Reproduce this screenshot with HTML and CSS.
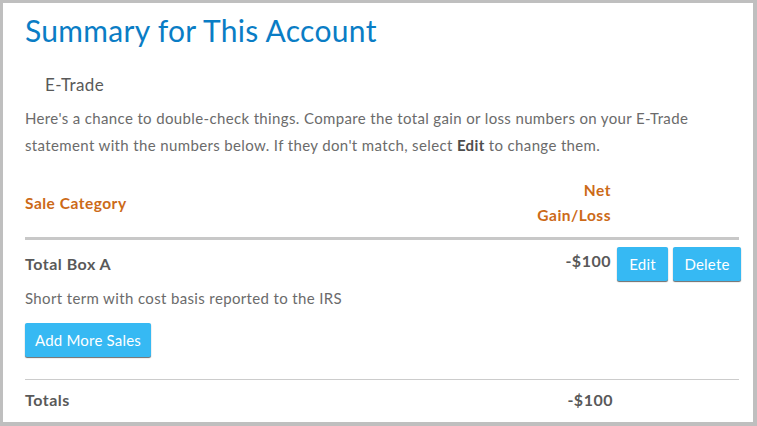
FILE: index.html
```html
<!DOCTYPE html>
<html lang="en">
<head>
<meta charset="utf-8">
<title>Summary for This Account</title>
<link rel="stylesheet" href="styles.css">
</head>
<body>
<div class="frame">
  <h1 class="title">Summary for This Account</h1>
  <div class="provider">E-Trade</div>
  <p class="intro">Here's a chance to double-check things. Compare the total gain or loss numbers on your E-Trade statement with the numbers below. If they don't match, select <b>Edit</b> to change them.</p>

  <div class="thead">
    <div class="th-cat">Sale Category</div>
    <div class="th-amt">Net<br>Gain/Loss</div>
    <div class="th-act"></div>
  </div>

  <div class="row">
    <div class="row-label">Total Box A</div>
    <div class="row-amt">-$100</div>
    <div class="row-act">
      <button class="btn btn-edit">Edit</button>
      <button class="btn btn-delete">Delete</button>
    </div>
  </div>
  <div class="desc">Short term with cost basis reported to the IRS</div>
  <div class="add-wrap"><button class="btn btn-add">Add More Sales</button></div>

  <div class="totals">
    <div class="tot-label">Totals</div>
    <div class="tot-amt">-$100</div>
    <div class="th-act"></div>
  </div>
</div>
</body>
</html>
```

FILE: styles.css
```css
html, body {
  margin: 0;
  padding: 0;
  height: 100%;
}
body {
  background: #bfbfbf;
  font-family: Lato, "Open Sans", "Liberation Sans", sans-serif;
  overflow: hidden;
}
.frame {
  box-sizing: border-box;
  margin: 3px 4px 0 3px;
  height: 419px;
  background: #ffffff;
  padding: 0 14px 0 22px;
  overflow: hidden;
}
.title {
  margin: 0;
  padding-top: 9px;
  font-size: 30px;
  line-height: 36px;
  font-weight: 400;
  color: #0a7dc5;
  letter-spacing: 0.3px;
}
.provider {
  margin-top: 27px;
  padding-left: 20px;
  font-size: 17px;
  line-height: 20px;
  color: #595959;
  letter-spacing: 0.4px;
}
.intro {
  margin: 10px 0 0 0;
  font-size: 15px;
  line-height: 27px;
  color: #6b6b6b;
  letter-spacing: 0.36px;
}
.intro b {
  color: #4d4d4d;
  font-weight: 700;
}
.thead, .row, .totals {
  display: grid;
  grid-template-columns: 1fr auto 128px;
  align-items: center;
}
.thead {
  margin-top: 19px;
  padding-bottom: 9px;
  border-bottom: 3px solid #c8c8c8;
  color: #cc6a18;
  font-weight: 700;
  font-size: 15.5px;
  letter-spacing: 0.5px;
  line-height: 25px;
}
.th-amt {
  text-align: right;
}
.row {
  padding-top: 7px;
  align-items: start;
}
.row-label, .row-amt, .tot-label, .tot-amt {
  font-size: 16px;
  font-weight: 700;
  color: #595959;
  line-height: 20px;
  letter-spacing: 0.5px;
}
.row-label {
  padding-top: 7px;
}
.row-amt {
  padding-top: 4px;
  text-align: right;
}
.row-act {
  display: flex;
  gap: 5px;
  padding-left: 6px;
  margin-right: -2px;
}
.btn {
  font-family: inherit;
  font-size: 15px;
  color: #ffffff;
  background: #36b9f3;
  border: 0;
  border-radius: 2px;
  box-shadow: 0 1px 1px 0 #6c6c6c;
  height: 34px;
  padding: 0;
  line-height: 34px;
  letter-spacing: 0.2px;
  cursor: pointer;
}
.btn-edit {
  width: 51px;
}
.btn-delete {
  width: 68px;
}
.desc {
  margin-top: 7px;
  font-size: 15px;
  line-height: 20px;
  color: #6b6b6b;
  letter-spacing: 0.36px;
}
.add-wrap {
  margin-top: 15px;
  padding-bottom: 22px;
  border-bottom: 1px solid #cccccc;
}
.btn-add {
  width: 126px;
}
.totals {
  padding-top: 10px;
}
.tot-amt {
  text-align: right;
  margin-right: -2px;
}
```
